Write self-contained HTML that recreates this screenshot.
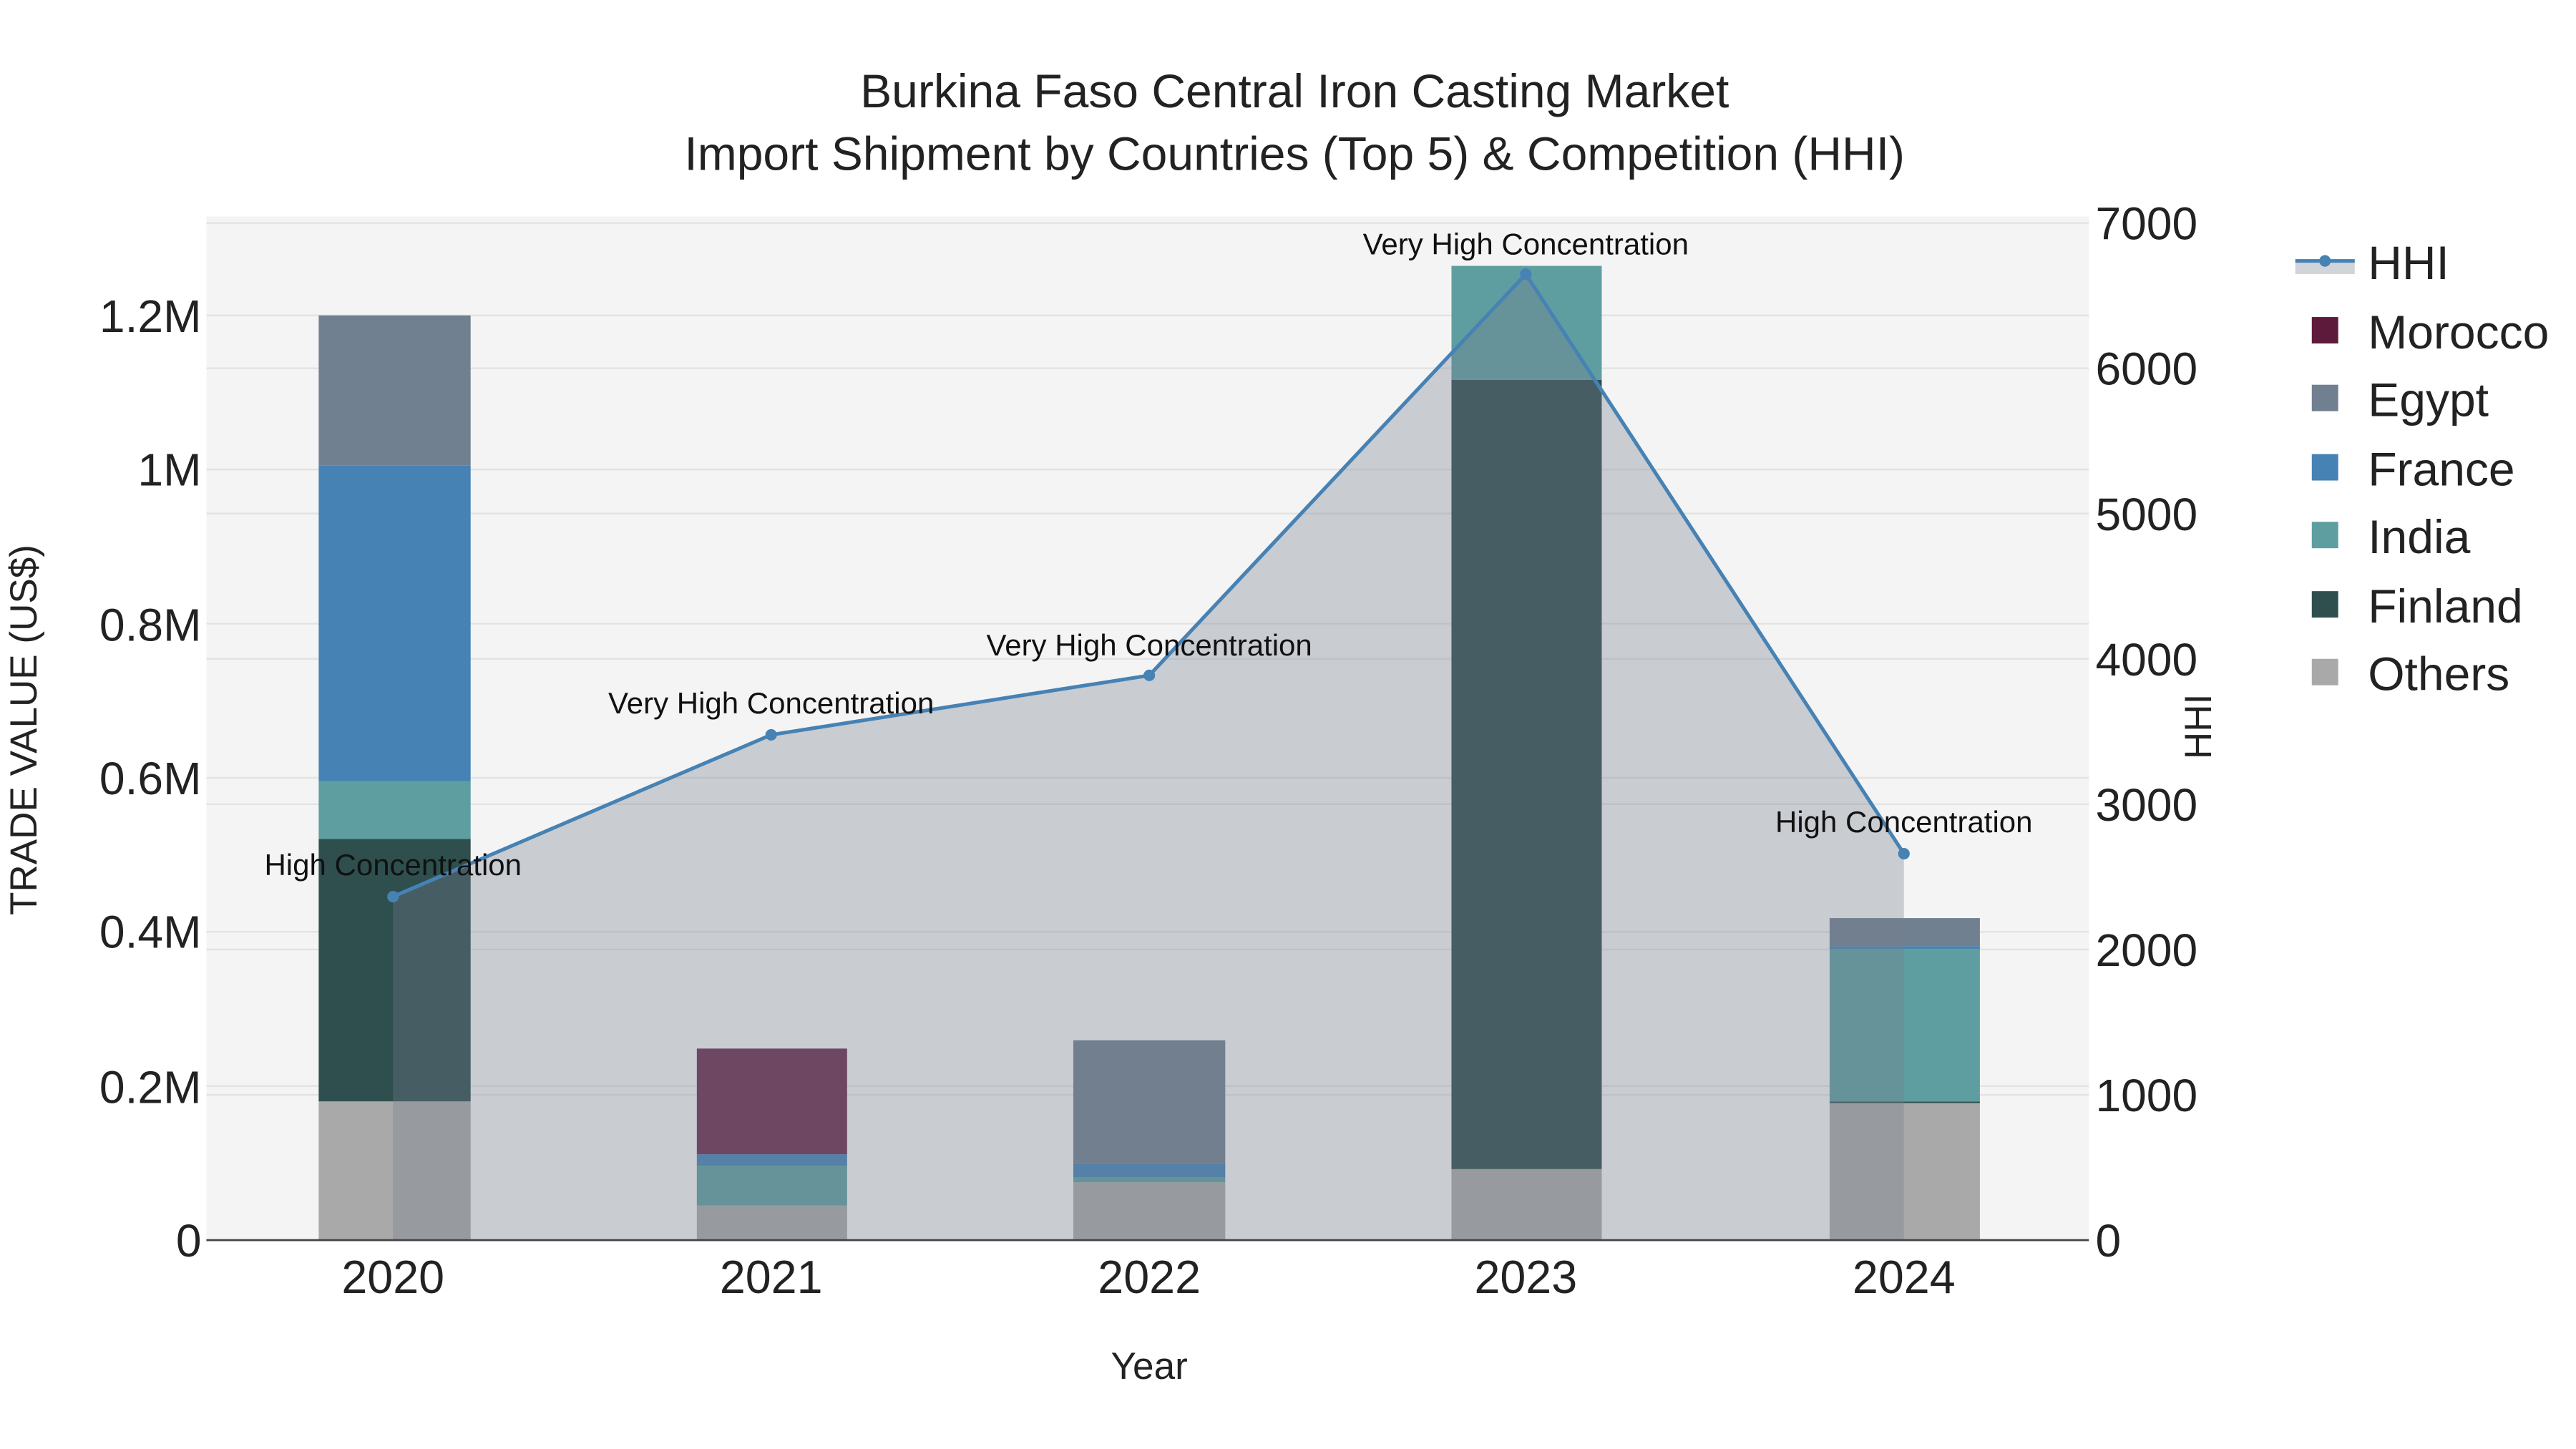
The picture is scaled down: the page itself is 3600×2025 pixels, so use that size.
<!DOCTYPE html>
<html><head><meta charset="utf-8"><style>
html,body{margin:0;padding:0;background:#fff;}
svg{display:block;font-family:"Liberation Sans",sans-serif;}
</style></head><body>
<svg width="3600" height="2025" viewBox="0 0 1560 877.5" xmlns="http://www.w3.org/2000/svg">
<rect width="1560" height="877.5" fill="#fff"/>
<rect x="125" y="131" width="1140" height="620" fill="#f4f4f4"/>
<g stroke="#e2e2e2" stroke-width="1">
<line x1="125" x2="1265" y1="657.7" y2="657.7"/><line x1="125" x2="1265" y1="564.3" y2="564.3"/>
<line x1="125" x2="1265" y1="471" y2="471"/><line x1="125" x2="1265" y1="377.7" y2="377.7"/>
<line x1="125" x2="1265" y1="284.3" y2="284.3"/><line x1="125" x2="1265" y1="191" y2="191"/>
<line x1="125" x2="1265" y1="663" y2="663"/><line x1="125" x2="1265" y1="575" y2="575"/>
<line x1="125" x2="1265" y1="487" y2="487"/><line x1="125" x2="1265" y1="399" y2="399"/>
<line x1="125" x2="1265" y1="311" y2="311"/><line x1="125" x2="1265" y1="223" y2="223"/>
<line x1="125" x2="1265" y1="135" y2="135"/>
</g>
<g>
<rect x="193" y="667" width="92" height="84" fill="#a9a9a9"/>
<rect x="193" y="508" width="92" height="159" fill="#2f4f4f"/>
<rect x="193" y="473" width="92" height="35" fill="#5f9ea0"/>
<rect x="193" y="282" width="92" height="191" fill="#4682b4"/>
<rect x="193" y="191" width="92" height="91" fill="#708090"/>

<rect x="422" y="730" width="91" height="21" fill="#a9a9a9"/>
<rect x="422" y="706" width="91" height="24" fill="#5f9ea0"/>
<rect x="422" y="699" width="91" height="7" fill="#4682b4"/>
<rect x="422" y="635" width="91" height="64" fill="#6b2d4f"/>

<rect x="650" y="716" width="92" height="35" fill="#a9a9a9"/>
<rect x="650" y="713" width="92" height="3" fill="#5f9ea0"/>
<rect x="650" y="705" width="92" height="8" fill="#4682b4"/>
<rect x="650" y="630" width="92" height="75" fill="#708090"/>

<rect x="879" y="708" width="91" height="43" fill="#a9a9a9"/>
<rect x="879" y="230" width="91" height="478" fill="#2f4f4f"/>
<rect x="879" y="161" width="91" height="69" fill="#5f9ea0"/>

<rect x="1108" y="668" width="91" height="83" fill="#a9a9a9"/>
<rect x="1108" y="667" width="91" height="1" fill="#2f4f4f"/>
<rect x="1108" y="574" width="91" height="93" fill="#5f9ea0"/>
<rect x="1108" y="573" width="91" height="1.5" fill="#4682b4"/>
<rect x="1108" y="556" width="91" height="17" fill="#708090"/>
</g>
<polygon points="238,543 467,445 696,409 924,166 1153,517 1153,751 238,751" fill="rgba(118,126,140,0.333)"/>
<line x1="125" x2="1265" y1="751" y2="751" stroke="#444" stroke-width="1.2"/>
<polyline points="238,543 467,445 696,409 924,166 1153,517" fill="none" stroke="#4682b4" stroke-width="2.2"/>
<g fill="#4682b4"><circle cx="238" cy="543" r="3.5"/><circle cx="467" cy="445" r="3.5"/><circle cx="696" cy="409" r="3.5"/><circle cx="924" cy="166" r="3.5"/><circle cx="1153" cy="517" r="3.5"/></g>
<g font-size="18.2" fill="#111" text-anchor="middle">
<text x="238" y="530">High Concentration</text>
<text x="467" y="432">Very High Concentration</text>
<text x="696" y="397">Very High Concentration</text>
<text x="924" y="154">Very High Concentration</text>
<text x="1153" y="504">High Concentration</text>
</g>
<g font-size="27.8" fill="#222" text-anchor="end">
<text x="122" y="761">0</text><text x="122" y="668">0.2M</text><text x="122" y="574">0.4M</text>
<text x="122" y="481">0.6M</text><text x="122" y="388">0.8M</text><text x="122" y="294">1M</text><text x="122" y="201">1.2M</text>
</g>
<g font-size="27.8" fill="#222">
<text x="1269" y="761">0</text><text x="1269" y="673">1000</text><text x="1269" y="585">2000</text>
<text x="1269" y="497">3000</text><text x="1269" y="409">4000</text><text x="1269" y="321">5000</text>
<text x="1269" y="233">6000</text><text x="1269" y="145">7000</text>
</g>
<g font-size="28" fill="#222" text-anchor="middle">
<text x="238" y="783">2020</text><text x="467" y="783">2021</text><text x="696" y="783">2022</text><text x="924" y="783">2023</text><text x="1153" y="783">2024</text>
</g>
<g font-size="28.6" fill="#222" text-anchor="middle">
<text x="784" y="65">Burkina Faso Central Iron Casting Market</text>
<text x="784" y="103">Import Shipment by Countries (Top 5) &amp; Competition (HHI)</text>
</g>
<text x="696" y="835" font-size="23" fill="#222" text-anchor="middle">Year</text>
<text transform="translate(22,442) rotate(-90)" font-size="23" fill="#222" text-anchor="middle">TRADE VALUE (US$)</text>
<text transform="translate(1339,440) rotate(-90)" font-size="23" fill="#222" text-anchor="middle">HHI</text>
<rect x="1390" y="158" width="36" height="8" fill="rgba(118,126,140,0.333)"/>
<line x1="1390" x2="1426" y1="158" y2="158" stroke="#4682b4" stroke-width="2.2"/>
<circle cx="1408" cy="158" r="3.5" fill="#4682b4"/>
<g font-size="28.6" fill="#222">
<text x="1434" y="169">HHI</text><text x="1434" y="211">Morocco</text><text x="1434" y="252">Egypt</text>
<text x="1434" y="294">France</text><text x="1434" y="335">India</text><text x="1434" y="377">Finland</text><text x="1434" y="418">Others</text>
</g>
<rect x="1400" y="192" width="16" height="16" fill="#5e1a3a"/>
<rect x="1400" y="233" width="16" height="16" fill="#708090"/>
<rect x="1400" y="275" width="16" height="16" fill="#4682b4"/>
<rect x="1400" y="316" width="16" height="16" fill="#5f9ea0"/>
<rect x="1400" y="358" width="16" height="16" fill="#2f4f4f"/>
<rect x="1400" y="399" width="16" height="16" fill="#a9a9a9"/>
</svg>
</body></html>
